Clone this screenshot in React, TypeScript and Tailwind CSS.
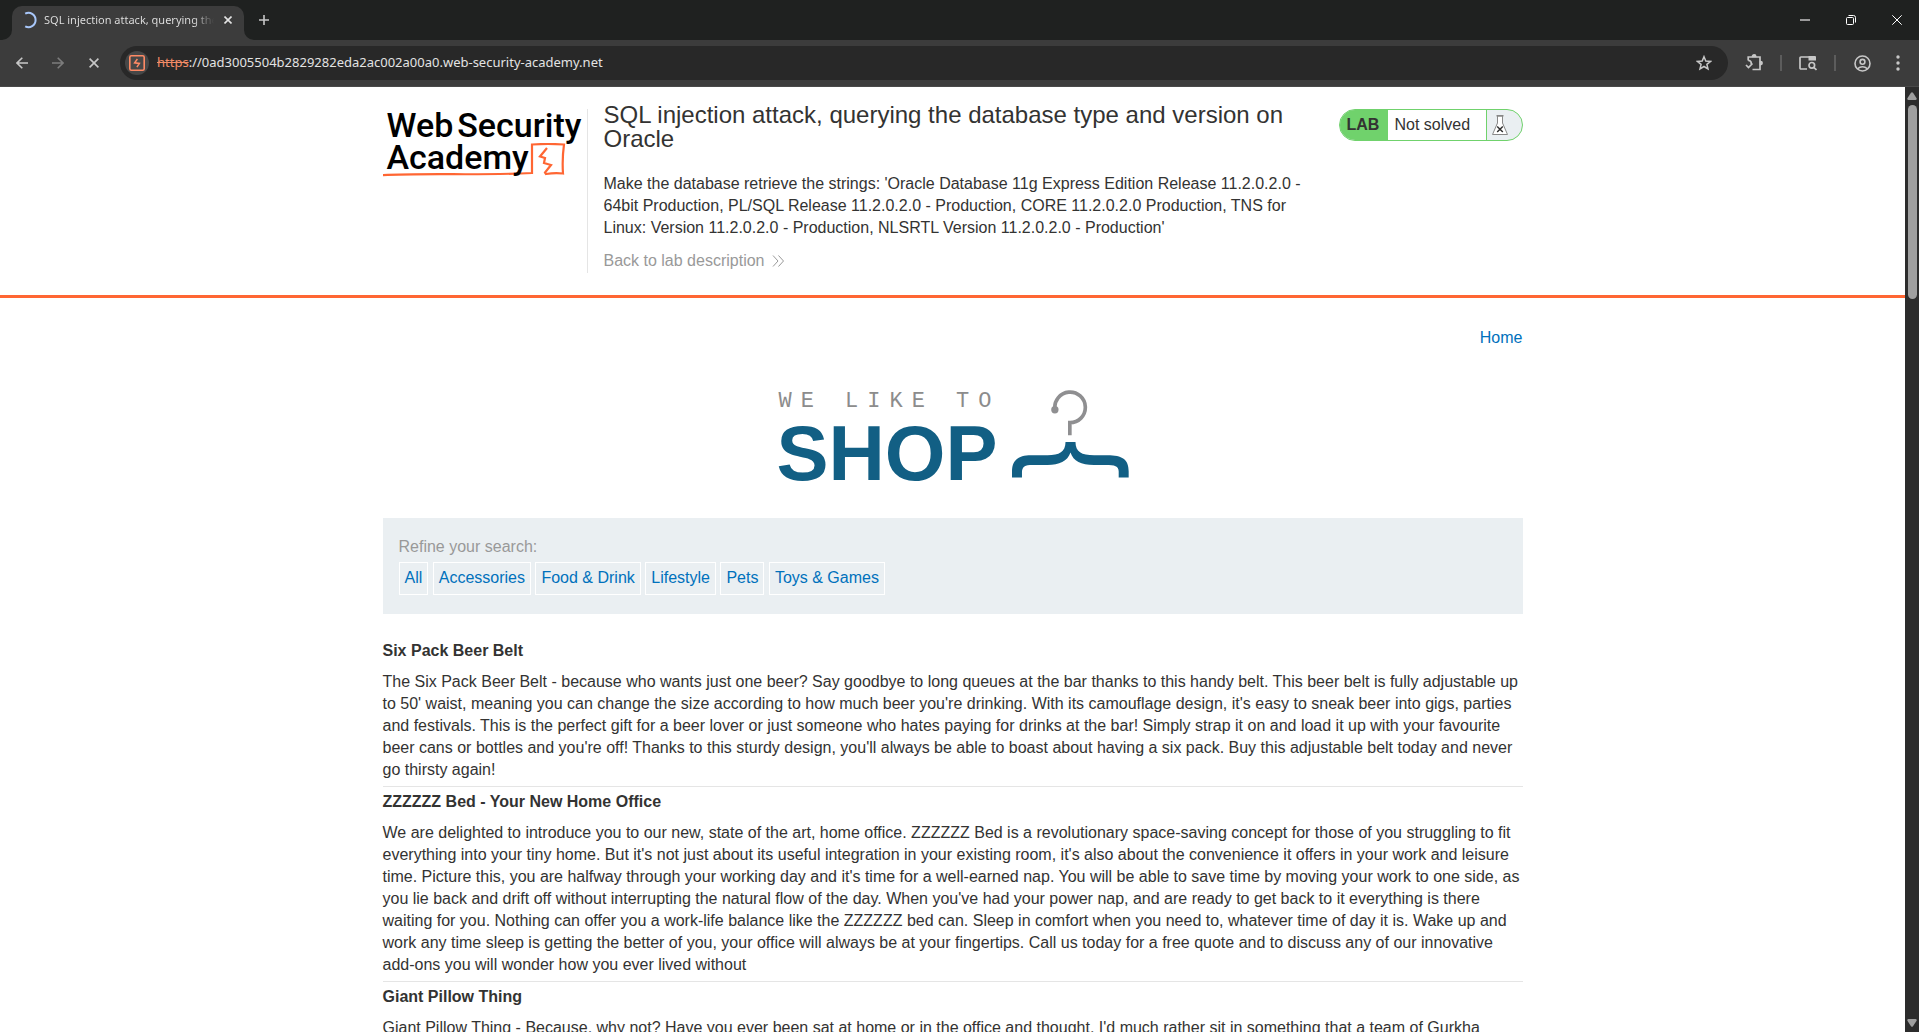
import { ReactNode } from "react";

const categories = ["All", "Accessories", "Food & Drink", "Lifestyle", "Pets", "Toys & Games"];

const products = [
  {
    name: "Six Pack Beer Belt",
    text: "The Six Pack Beer Belt - because who wants just one beer? Say goodbye to long queues at the bar thanks to this handy belt. This beer belt is fully adjustable up to 50' waist, meaning you can change the size according to how much beer you're drinking. With its camouflage design, it's easy to sneak beer into gigs, parties and festivals. This is the perfect gift for a beer lover or just someone who hates paying for drinks at the bar! Simply strap it on and load it up with your favourite beer cans or bottles and you're off! Thanks to this sturdy design, you'll always be able to boast about having a six pack. Buy this adjustable belt today and never go thirsty again!",
  },
  {
    name: "ZZZZZZ Bed - Your New Home Office",
    text: "We are delighted to introduce you to our new, state of the art, home office. ZZZZZZ Bed is a revolutionary space-saving concept for those of you struggling to fit everything into your tiny home. But it's not just about its useful integration in your existing room, it's also about the convenience it offers in your work and leisure time. Picture this, you are halfway through your working day and it's time for a well-earned nap. You will be able to save time by moving your work to one side, as you lie back and drift off without interrupting the natural flow of the day. When you've had your power nap, and are ready to get back to it everything is there waiting for you. Nothing can offer you a work-life balance like the ZZZZZZ bed can. Sleep in comfort when you need to, whatever time of day it is. Wake up and work any time sleep is getting the better of you, your office will always be at your fingertips. Call us today for a free quote and to discuss any of our innovative add-ons you will wonder how you ever lived without",
  },
  {
    name: "Giant Pillow Thing",
    text: "Giant Pillow Thing - Because, why not? Have you ever been sat at home or in the office and thought, I'd much rather sit in something that a team of Gurkha",
  },
];

function IconButton({ label, className = "", children }: { label: string; className?: string; children: ReactNode }) {
  return (
    <button type="button" aria-label={label} className={`flex shrink-0 items-center justify-center ${className}`}>
      {children}
    </button>
  );
}

function TabStrip() {
  return (
    <div className="flex h-10 items-end bg-[#1f2120] pl-3">
      <div className="relative flex h-[34px] w-[232px] items-center rounded-t-[10px] bg-[#3c3c3c] pb-[6px] pl-[9px] pr-2">
        <svg className="absolute -left-2.5 bottom-0" width="10" height="10" aria-hidden="true">
          <path d="M10 0 V10 H0 A10 10 0 0 0 10 0Z" fill="#3c3c3c" />
        </svg>
        <svg className="absolute -right-2.5 bottom-0" width="10" height="10" aria-hidden="true">
          <path d="M0 0 V10 H10 A10 10 0 0 1 0 0Z" fill="#3c3c3c" />
        </svg>
        <svg width="16" height="18" viewBox="0 0 16 18" fill="none" aria-hidden="true">
          <path d="M4.2 2.7 A7 7.2 0 1 1 4.2 15.3" stroke="#a8c7fa" strokeWidth="2" />
        </svg>
        <span className="ml-[7px] flex-1 overflow-hidden whitespace-nowrap bg-linear-to-r from-[#e3e3e3] from-88% to-transparent bg-clip-text font-['Noto_Sans',sans-serif] text-[11px] text-transparent">
          SQL injection attack, querying the database type
        </span>
        <IconButton label="Close tab" className="ml-1.5 size-4 text-[#e3e3e3]">
          <svg width="8" height="8" viewBox="0 0 8 8" stroke="currentColor" strokeWidth="1.6"><path d="M.5 .5 7.5 7.5M7.5 .5 .5 7.5" /></svg>
        </IconButton>
      </div>
      <div className="flex h-10 flex-1 items-center">
        <IconButton label="New tab" className="ml-[10px] size-5 text-[#c7c7c7]">
          <svg width="10" height="10" viewBox="0 0 10 10" stroke="currentColor" strokeWidth="1.6"><path d="M5 0V10M0 5H10" /></svg>
        </IconButton>
        <div className="ml-auto flex text-white">
          <IconButton label="Minimize" className="h-10 w-[46px]">
            <svg width="10" height="2"><path d="M0 1H10" stroke="#9a9a9a" strokeWidth="2" /></svg>
          </IconButton>
          <IconButton label="Restore" className="h-10 w-[46px]">
            <svg width="10" height="10" viewBox="0 0 10 10" fill="none" stroke="currentColor">
              <rect x=".5" y="2.5" width="7" height="7" rx="1" />
              <path d="M2.5 .5H7.5A2 2 0 0 1 9.5 2.5V7.5" />
            </svg>
          </IconButton>
          <IconButton label="Close window" className="h-10 w-[45px]">
            <svg width="10" height="10" viewBox="0 0 10 10" stroke="currentColor"><path d="M.3 .3 9.7 9.7M9.7 .3 .3 9.7" /></svg>
          </IconButton>
        </div>
      </div>
    </div>
  );
}

function Toolbar() {
  return (
    <div className="flex h-[47px] items-center border-b border-[#494949] bg-[#3c3c3c] pl-[10px] pr-[9px] text-[#c7c7c7]">
      <IconButton label="Back" className="size-6">
        <svg width="12" height="12" viewBox="0 0 12 12" fill="none" stroke="currentColor" strokeWidth="1.6"><path d="M12 6H1M6.3 .7 1 6 6.3 11.3" /></svg>
      </IconButton>
      <IconButton label="Forward" className="ml-3 size-6 text-[#7c7c7c]">
        <svg width="12" height="12" viewBox="0 0 12 12" fill="none" stroke="currentColor" strokeWidth="1.6"><path d="M0 6H11M5.7 .7 11 6 5.7 11.3" /></svg>
      </IconButton>
      <IconButton label="Stop" className="ml-3 size-6">
        <svg width="10" height="10" viewBox="0 0 10 10" fill="none" stroke="currentColor" strokeWidth="1.6"><path d="M.6 .6 9.4 9.4M9.4 .6 .6 9.4" /></svg>
      </IconButton>
      <form className="ml-[14px] flex h-[34px] flex-1 items-center rounded-full bg-[#282828] pl-[5px] pr-3 font-['Noto_Sans',sans-serif] text-[13px]">
        <IconButton label="Site information" className="size-6 rounded-full bg-[#474747]">
          <svg width="16" height="16" viewBox="0 0 16 16" fill="none" stroke="#ff8a65" strokeWidth="1.6">
            <rect x=".8" y=".8" width="14.4" height="14.4" rx="1.5" />
            <path d="M8.4 4 5.6 7.8 10.4 8.4 7.9 12.2" strokeWidth="1.5" />
          </svg>
        </IconButton>
        <label htmlFor="url" className="ml-2 text-[#f28b66] line-through">https</label>
        <input id="url" type="text" defaultValue="://0ad3005504b2829282eda2ac002a00a0.web-security-academy.net" className="min-w-0 flex-1 bg-transparent text-[#e3e3e3] outline-none" />
        <IconButton label="Bookmark" className="size-6">
          <svg width="16" height="16" viewBox="0 0 16 16" fill="none" stroke="currentColor" strokeWidth="1.5"><path d="M8 1.7 9.8 6.1 14.5 6.4 10.9 9.4 12 14 8 11.5 4 14 5.1 9.4 1.5 6.4 6.2 6.1Z" /></svg>
        </IconButton>
      </form>
      <IconButton label="Extensions" className="ml-[14px] size-6">
        <svg width="18" height="18" viewBox="0 0 18 18" fill="none" stroke="currentColor" strokeWidth="1.7">
          <path d="M3.2 6.5V3H15V15.5H7.5" /><path d="M3.2 6.4C6 6.6 6.6 8.6 6 10M1 11 3.5 13.5 7.5 9.5" />
          <path d="M7.5 2.5A1.6 1.6 0 0 1 10.7 2.5ZM15.5 7.5A1.6 1.6 0 0 1 15.5 10.7Z" fill="currentColor" />
        </svg>
      </IconButton>
      <span className="ml-[14px] h-4 w-0.5 bg-[#5c5c5c]" />
      <IconButton label="Search tabs" className="ml-[14px] size-6">
        <svg width="18" height="16" viewBox="0 0 18 16" fill="none" stroke="currentColor" strokeWidth="1.7">
          <path d="M8 14H2Q1 14 1 13V3Q1 2 2 2H10" /><path d="M9.5 1H16Q17 1 17 2V5.5H9.5Z" fill="currentColor" stroke="none" />
          <circle cx="12.8" cy="10.3" r="2.8" /><path d="M14.8 12.3 17.5 15" />
        </svg>
      </IconButton>
      <span className="ml-[14px] h-4 w-0.5 bg-[#5c5c5c]" />
      <IconButton label="Profile" className="ml-[14px] size-6">
        <svg width="17" height="17" viewBox="0 0 17 17" fill="none" stroke="currentColor" strokeWidth="1.6">
          <circle cx="8.5" cy="8.5" r="7.5" /><circle cx="8.5" cy="6.8" r="2.4" /><path d="M3.4 13.8Q8.5 9.8 13.6 13.8" />
        </svg>
      </IconButton>
      <IconButton label="Menu" className="ml-3 size-6">
        <svg width="4" height="16" viewBox="0 0 4 16" fill="currentColor"><circle cx="2" cy="2" r="1.7" /><circle cx="2" cy="8" r="1.7" /><circle cx="2" cy="14" r="1.7" /></svg>
      </IconButton>
    </div>
  );
}

function AcademyLogo() {
  return (
    <a href="#academy" className="relative block h-[70px] w-[203px] font-['Roboto',sans-serif] text-[34px] leading-8 font-medium text-black">
      <svg className="absolute left-0 top-[34px]" width="184" height="36" viewBox="0 0 184 36" fill="none" aria-hidden="true">
        <path d="M0 32.2Q20 31 70 31.2T149 30V1.5Q165 .5 181 1.5Q179 16 180 30.5Q172 29.5 163 31L162 29.5 168 22 161 20 162 15 157 13.5 164 5" stroke="#ff6633" strokeWidth="2.2" />
      </svg>
      <span className="relative flex gap-1 pl-1"><span>Web</span><span>Security</span></span>
      <span className="relative block pl-1">Academy</span>
    </a>
  );
}

function LabHeader() {
  return (
    <header className="border-b-[3px] border-[#ff6633] px-4">
      <div className="mx-auto flex h-[208px] max-w-[1140px] items-start pt-[22px]">
        <AcademyLogo />
        <div className="ml-px w-[740px] border-l border-[#e5e5e5] pb-px pl-4">
          <h2 className="-mt-1.5 text-[24px] leading-6">SQL injection attack, querying the database type and version on Oracle</h2>
          <p className="mt-[22px] max-w-[710px] leading-[22px]">
            Make the database retrieve the strings: 'Oracle Database 11g Express Edition Release 11.2.0.2.0 - 64bit Production, PL/SQL Release 11.2.0.2.0 - Production, CORE 11.2.0.2.0 Production, TNS for Linux: Version 11.2.0.2.0 - Production, NLSRTL Version 11.2.0.2.0 - Production'
          </p>
          <a href="#description" className="mt-[11px] flex items-center gap-2 leading-[22px] text-[#999999]">
            Back to lab description
            <svg width="13" height="12" viewBox="0 0 13 12" fill="none" stroke="currentColor" aria-hidden="true"><path d="M1 .5 6 6 1 11.5M6.5 .5 11.5 6 6.5 11.5" /></svg>
          </a>
        </div>
        <div className="ml-auto flex h-8 w-[184px] overflow-hidden rounded-full border border-[#70d26c] bg-[#eaeff2] leading-[30px]">
          <span className="w-12 bg-[#70d26c] pl-[7px] font-bold">LAB</span>
          <p className="w-[99px] border-r border-[#70d26c] bg-white pl-[7px]">Not solved</p>
          <svg className="ml-1 mt-[5px]" width="18" height="21" viewBox="0 0 18 21" fill="none" stroke="#888" aria-hidden="true">
            <path d="M6.5 1V8L1.5 19.5H16.5L11.5 8V1Z" fill="#fff" />
            <path d="M5.5 .8H12.5" strokeWidth="1.5" />
            <path d="M6.2 11.5 11.8 17M11.8 11.5 6.2 17" stroke="#333" strokeWidth="1.5" />
          </svg>
        </div>
      </div>
    </header>
  );
}

function ShopLogo() {
  return (
    <section className="flex justify-center gap-[17px]">
      <div className="w-[218px]">
        <p className="pl-0.5 font-['Liberation_Mono',monospace] text-[22px] leading-6 tracking-[9px] whitespace-pre text-[#8c8c8c]">WE LIKE TO</p>
        <h1 className="mt-1 text-[78px] leading-[70px] font-bold text-[#125f84]">SHOP</h1>
      </div>
      <svg width="117" height="88" viewBox="753 60 352 264" aria-hidden="true">
        <path d="M882 118A46 46 0 1 1 927 158V196" fill="none" stroke="#8f8f91" strokeWidth="11" />
        <circle cx="882" cy="119" r="11" fill="#8f8f91" />
        <path d="M753 323V305C753 268 775 256 810 256H860C895 256 914 245 914 216H944C944 245 962 256 1000 256H1040C1085 256 1104 268 1104 305V323H1074V305C1074 288 1062 285 1035 285H1000C960 285 938 275 929 248C920 275 895 285 860 285H815C792 285 783 290 783 308V323Z" fill="#125f84" />
      </svg>
    </section>
  );
}

function Scrollbar() {
  return (
    <div className="flex w-[14px] shrink-0 flex-col items-center bg-[#2c2c2c] py-[5px]" aria-hidden="true">
      <svg width="10" height="8" viewBox="0 0 10 8" fill="#9f9f9f"><path d="M4 .8Q5-.4 6 .8L9.6 6.3Q10 8 8.5 8H1.5Q0 8 .4 6.3Z" /></svg>
      <div className="mt-[5px] h-[194px] w-[9px] rounded-full bg-[#9f9f9f]" />
      <svg className="mt-auto" width="10" height="8" viewBox="0 0 10 8" fill="#9f9f9f"><path d="M4 7.2Q5 8.4 6 7.2L9.6 1.7Q10 0 8.5 0H1.5Q0 0 .4 1.7Z" /></svg>
    </div>
  );
}

export default function App() {
  return (
    <div className="flex h-screen flex-col overflow-hidden bg-white font-['Liberation_Sans',Arial,sans-serif] text-base text-[#333332]">
      <TabStrip />
      <Toolbar />
      <div className="flex min-h-0 flex-1">
        <div className="min-w-0 flex-1 overflow-hidden">
          <LabHeader />
          <main className="mx-auto max-w-[1140px]">
            <nav className="flex justify-end pt-[29px] leading-[22px]">
              <a href="#home" className="text-[#0071bc]">Home</a>
            </nav>
            <div className="pt-[41px]"><ShopLogo /></div>
            <section className="mt-[30px] bg-[#eaeff2] px-4 pt-[18px] pb-[19px]">
              <p className="leading-[22px] text-[#999999]">Refine your search:</p>
              <div className="mt-1 leading-[22px]">
                {categories.map((c) => (
                  <span key={c}>
                    <a href="#filter" className="inline-block border border-white px-[5px] pt-1 pb-[5px] text-[#0071bc]">{c}</a>{" "}
                  </span>
                ))}
              </div>
            </section>
            <section className="pt-[22px]">
              {products.map((p) => (
                <article key={p.name} className="border-b border-[#e5e5e5] pt-1 pb-[5px]">
                  <h3 className="leading-[22px] font-bold">{p.name}</h3>
                  <p className="mt-[9px] leading-[22px]">{p.text}</p>
                </article>
              ))}
            </section>
          </main>
        </div>
        <Scrollbar />
      </div>
    </div>
  );
}
